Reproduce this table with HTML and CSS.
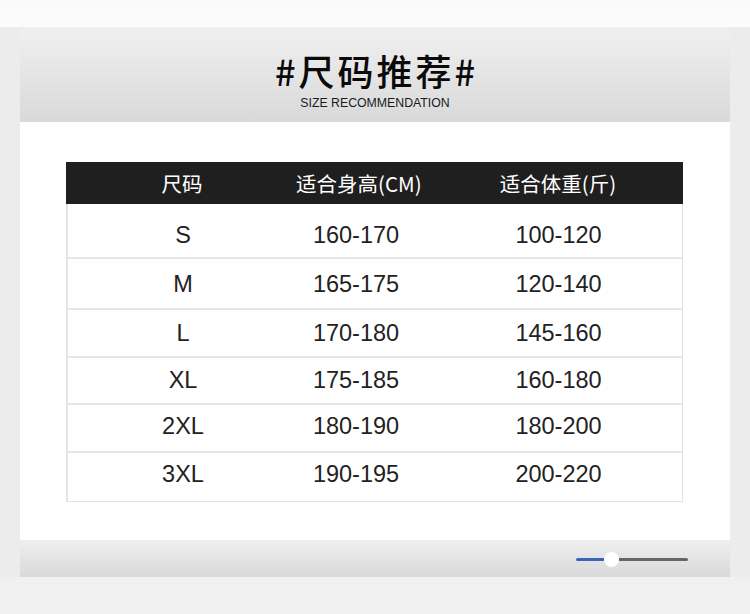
FILE: index.html
```html
<!DOCTYPE html>
<html lang="zh">
<head>
<meta charset="utf-8">
<link rel="stylesheet" href="styles.css">
</head>
<body>
<div class="top-strip"></div>
<div class="page">
  <div class="card">
    <div class="card-head">
      <div class="title">#尺码推荐#</div>
      <div class="subtitle">SIZE RECOMMENDATION</div>
    </div>
    <div class="card-body">
      <div class="table">
        <div class="row head">
          <div class="c1">尺码</div>
          <div class="c2">适合身高(CM)</div>
          <div class="c3">适合体重(斤)</div>
        </div>
        <div class="row"><div class="c1">S</div><div class="c2">160-170</div><div class="c3">100-120</div></div>
        <div class="row"><div class="c1">M</div><div class="c2">165-175</div><div class="c3">120-140</div></div>
        <div class="row"><div class="c1">L</div><div class="c2">170-180</div><div class="c3">145-160</div></div>
        <div class="row"><div class="c1">XL</div><div class="c2">175-185</div><div class="c3">160-180</div></div>
        <div class="row"><div class="c1">2XL</div><div class="c2">180-190</div><div class="c3">180-200</div></div>
        <div class="row"><div class="c1">3XL</div><div class="c2">190-195</div><div class="c3">200-220</div></div>
      </div>
    </div>
    <div class="card-foot">
      <div class="slider">
        <div class="track-on"></div>
        <div class="knob"></div>
        <div class="track-off"></div>
      </div>
    </div>
  </div>
</div>
</body>
</html>
```

FILE: styles.css
```css
* { box-sizing: border-box; }
html, body { margin: 0; padding: 0; }
body {
  background: #f0f0f1;
  width: 750px;
  height: 614px;
  overflow: hidden;
  font-family: "Liberation Sans", Arial, "Noto Sans CJK SC", sans-serif;
}
.top-strip {
  height: 27px;
  background: linear-gradient(#fafafa, #fcfcfc);
}
.page {
  padding: 0 20px 0 20px;
  background: #ececed;
}
.card {
  width: 710px;
  background: #ffffff;
  border-radius: 9px 9px 0 0;
  overflow: hidden;
}
.card-head {
  height: 95px;
  background: linear-gradient(#f0f0f0, #d9d9db);
  display: flex;
  flex-direction: column;
  align-items: center;
  padding-top: 25px;
}
.title {
  font-family: "Noto Sans CJK SC", sans-serif;
  font-weight: 500;
  font-size: 36px;
  line-height: 36px;
  letter-spacing: 3px;
  margin-left: 3px;
  color: #0a0a0a;
}
.subtitle {
  font-size: 12.3px;
  line-height: 12px;
  color: #1a1a1a;
  margin-top: 9px;
}
.card-body {
  padding: 40px 47px 38px 46px;
}
.table {
  width: 617px;
  border: 1px solid #e2e2e2;
  border-top: none;
  border-left: 2px solid #e4e4e4;
}
.row {
  display: grid;
  grid-template-columns: 230px 116px 1fr;
  align-items: center;
  height: 48px;
  border-top: 2px solid #e6e6e6;
  font-size: 23.5px;
  color: #222;
}
.row > div { text-align: center; white-space: nowrap; }
.row .c3 { padding-left: 21px; }
.row.head {
  height: 42px;
  border-top: none;
  background: #1f1f1f;
  color: #ffffff;
  font-family: "Noto Sans CJK SC", sans-serif;
  font-size: 20.5px;
  margin-left: -2px;
  margin-right: -1px;
}
.row.head .c1 { padding-left: 2px; }
.row:nth-child(2) { height: 53px; border-top: none; padding-top: 9px; }
.row:nth-child(3) { height: 51px; padding-top: 2px; }
.row:nth-child(4) { height: 48px; }
.row:nth-child(5) { height: 47px; padding-bottom: 1px; }
.row:nth-child(6) { height: 48px; padding-bottom: 3px; }
.row:nth-child(7) { height: 50px; padding-bottom: 5px; }
.card-foot {
  height: 37px;
  background: linear-gradient(#efefef, #d9d9db);
  display: flex;
  justify-content: flex-end;
  align-items: center;
  padding-right: 42px;
  padding-top: 1px;
}
.slider {
  width: 112px;
  display: flex;
  align-items: center;
}
.track-on {
  width: 28px;
  height: 3px;
  background: #3b66b7;
  border-radius: 2px 0 0 2px;
}
.knob {
  width: 15px;
  height: 15px;
  border-radius: 50%;
  background: #ffffff;
  flex: none;
}
.track-off {
  flex: 1;
  height: 3px;
  background: #666666;
  border-radius: 0 2px 2px 0;
}
```
